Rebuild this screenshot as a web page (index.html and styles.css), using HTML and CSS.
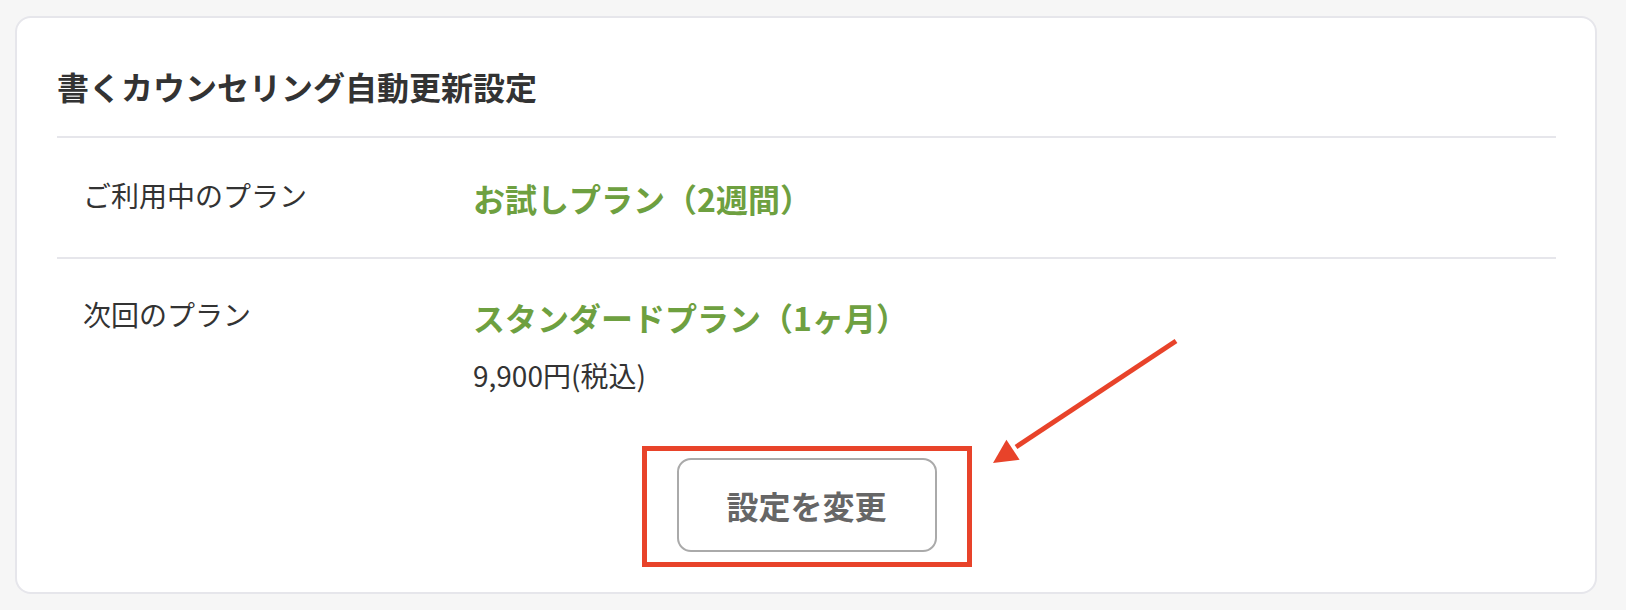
FILE: index.html
```html
<!DOCTYPE html>
<html lang="ja">
<head>
<meta charset="utf-8">
<title>書くカウンセリング自動更新設定</title>
<link rel="stylesheet" href="styles.css">
</head>
<body>
<div class="page">
  <section class="card">
    <h1 class="card-title">書くカウンセリング自動更新設定</h1>
    <div class="row">
      <div class="row-label">ご利用中のプラン</div>
      <div class="row-value">
        <div class="plan">お試しプラン（2週間）</div>
      </div>
    </div>
    <div class="row">
      <div class="row-label">次回のプラン</div>
      <div class="row-value">
        <div class="plan">スタンダードプラン（1ヶ月）</div>
        <div class="price">9,900円(税込)</div>
      </div>
    </div>
    <div class="actions">
      <button class="change-btn" type="button">設定を変更</button>
    </div>
    <div class="highlight-box"></div>
    <svg class="highlight-arrow" width="210" height="150" viewBox="0 0 210 150" aria-hidden="true">
      <line x1="196" y1="11" x2="36" y2="117" stroke="#e8432a" stroke-width="5"/>
      <polygon points="13,133 26.4,109.7 39.6,129.7" fill="#e8432a"/>
    </svg>
  </section>
</div>
</body>
</html>
```

FILE: styles.css
```css
* {
  box-sizing: border-box;
}

html, body {
  margin: 0;
  padding: 0;
  background: #f6f6f6;
}

body {
  font-family: "Noto Sans CJK JP", "Noto Sans", sans-serif;
  color: #333333;
}

.page {
  padding: 16px 29px 16px 15px;
}

.card {
  position: relative;
  width: 1582px;
  height: 578px;
  background: #ffffff;
  border: 2px solid #e6e6eb;
  border-radius: 16px;
  padding: 44px 39px 40px 40px;
}

.card-title {
  margin: 0 0 26px 0;
  font-size: 32px;
  line-height: 48px;
  font-weight: 700;
  color: #333333;
}

.row {
  display: flex;
  align-items: flex-start;
  border-top: 2px solid #e6e6eb;
  padding: 36px 26px 35px 26px;
}

.row + .row {
  padding-top: 34px;
  padding-bottom: 0;
}

.row-label {
  width: 390px;
  flex: none;
  font-size: 28px;
  line-height: 42px;
  color: #333333;
}

.row-value {
  display: flex;
  flex-direction: column;
  gap: 13px;
}

.plan {
  font-size: 32px;
  line-height: 48px;
  font-weight: 700;
  color: #6ea040;
}

.price {
  font-size: 28px;
  line-height: 42px;
  color: #333333;
}

.actions {
  display: flex;
  justify-content: center;
  margin-top: 62px;
}

.change-btn {
  width: 260px;
  height: 94px;
  background: #ffffff;
  border: 2px solid #aaaaaa;
  border-radius: 14px;
  font-family: "Noto Sans CJK JP", "Noto Sans", sans-serif;
  font-size: 32px;
  font-weight: 700;
  color: #666666;
  padding: 0;
}

.highlight-box {
  position: absolute;
  left: 625px;
  top: 428px;
  width: 330px;
  height: 121px;
  border: 5px solid #e8432a;
}

.highlight-arrow {
  position: absolute;
  left: 963px;
  top: 312px;
}
```
